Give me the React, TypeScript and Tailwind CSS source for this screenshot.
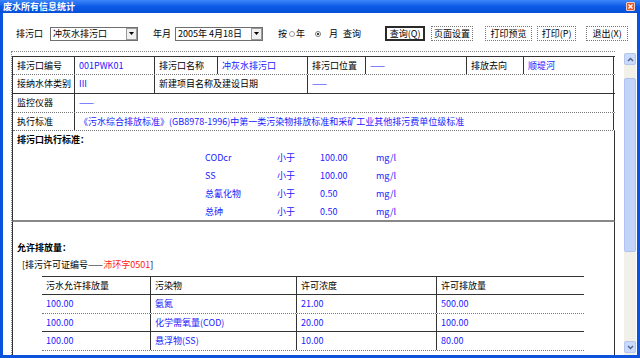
import React from "react";

const BL = "text-[#2020ff]";

function Tri() {
  return (
    <svg width="5" height="3" viewBox="0 0 5 3">
      <path d="M0 0h5L2.5 3z" fill="#000" />
    </svg>
  );
}

function Combo({ children, w }: { children: React.ReactNode; w: string }) {
  return (
    <div className={`h-[14px] ${w} border border-[#6f6f6f] bg-white flex items-center`}>
      <span className="flex-1 pl-[2px] whitespace-nowrap overflow-hidden leading-[12px]">{children}</span>
      <div className="w-[11px] h-[12px] border border-[#9a9a9a] bg-[#f0f0f0] flex items-center justify-center">
        <Tri />
      </div>
    </div>
  );
}

function Btn({ children, cls }: { children: React.ReactNode; cls: string }) {
  return (
    <div className={`h-[15px] bg-white flex items-center justify-center whitespace-nowrap leading-[12px] ${cls}`}>
      {children}
    </div>
  );
}

function Cell({ w, children, c = "" }: { w: string; children?: React.ReactNode; c?: string }) {
  return (
    <div className={`${w} h-full border-r border-[#333] flex items-center pl-[4px] whitespace-nowrap overflow-hidden ${c}`}>
      {children}
    </div>
  );
}

function Chev({ up }: { up?: boolean }) {
  return (
    <svg width="7" height="5" viewBox="0 0 7 5">
      <path d={up ? "M1 4L3.5 1.5L6 4" : "M1 1L3.5 3.5L6 1"} stroke="#4d6185" strokeWidth="1.4" fill="none" />
    </svg>
  );
}

export default function App() {
  const items = [
    ["CODcr", "小于", "100.00", "mg/l"],
    ["SS", "小于", "100.00", "mg/l"],
    ["总氰化物", "小于", "0.50", "mg/l"],
    ["总砷", "小于", "0.50", "mg/l"],
  ];
  return (
    <div className="w-[640px] h-[358px] bg-[#0b52dc] flex flex-col overflow-hidden font-['Noto_Sans_CJK_SC',sans-serif] text-[9px] leading-[12px] text-black">
      {/* title bar */}
      <div className="h-[13px] flex items-center pl-[3px] pr-[5px] bg-gradient-to-b from-[#3b86f8] via-[#0b5ae8] to-[#0650d6]">
        <span className="text-white font-bold text-[9px] leading-[13px] whitespace-nowrap">废水所有信息统计</span>
        <div className="ml-auto w-[9px] h-[9px] bg-[#e4582c] border border-[#f6c9b8] rounded-[1px] flex items-center justify-center">
          <svg width="5" height="5" viewBox="0 0 5 5">
            <path d="M0.5 0.5L4.5 4.5M4.5 0.5L0.5 4.5" stroke="#fff" strokeWidth="1.3" />
          </svg>
        </div>
      </div>

      {/* body */}
      <div className="flex-1 mx-[3px] mb-[3px] bg-white flex flex-col min-h-0">
        {/* toolbar */}
        <div className="h-[38px] shrink-0 flex items-center pt-[3px] whitespace-nowrap">
          <span className="ml-[13px]">排污口</span>
          <div className="ml-[7px]">
            <Combo w="w-[88px]">冲灰水排污口</Combo>
          </div>
          <span className="ml-[15px]">年月</span>
          <div className="ml-[4px]">
            <Combo w="w-[88px]">2005年 4月18日</Combo>
          </div>
          <span className="ml-[15px]">按</span>
          <div className="ml-[2px] w-[6px] h-[6px] rounded-full border border-[#9a9a9a] bg-white" />
          <span className="ml-[1px]">年</span>
          <div className="ml-[10px] w-[6px] h-[6px] rounded-full border border-[#7a7a7a] bg-white flex items-center justify-center">
            <div className="w-[2px] h-[2px] rounded-full bg-black" />
          </div>
          <span className="ml-[8px]">月</span>
          <span className="ml-[5px]">查询</span>

          <Btn cls="ml-[24px] w-[40px] border-2 border-[#2a2a2a]">查询(Q)</Btn>
          <Btn cls="ml-[6px] w-[42px] border border-dotted border-[#777]">页面设置</Btn>
          <Btn cls="ml-[12px] w-[47px] border border-dotted border-[#777]">打印预览</Btn>
          <Btn cls="ml-[5px] w-[39px] border border-dotted border-[#777]">打印(P)</Btn>
          <Btn cls="ml-[10px] w-[42px] border border-dotted border-[#777]">退出(X)</Btn>
        </div>

        {/* content */}
        <div className="flex-1 flex min-h-0">
          <div className="ml-[8px] w-[604px] border-t border-l border-dotted border-[#8a8a8a] pt-[4px] flex flex-col">
            {/* info table */}
            <div className="w-[603px] border-t border-l border-[#333]">
              <div className="flex h-[18px] border-b border-dotted border-[#777]">
                <Cell w="w-[62px]">排污口编号</Cell>
                <Cell w="w-[80px]" c={BL}>001PWK01</Cell>
                <Cell w="w-[63px]">排污口名称</Cell>
                <Cell w="w-[90px]" c={BL}>冲灰水排污口</Cell>
                <Cell w="w-[58px]">排污口位置</Cell>
                <Cell w="w-[101px]" c={BL}>——</Cell>
                <Cell w="w-[57px]">排放去向</Cell>
                <Cell w="w-[90px]" c={BL}>顺堤河</Cell>
              </div>
              <div className="flex h-[19px] border-b border-[#333]">
                <Cell w="w-[62px]">接纳水体类别</Cell>
                <Cell w="w-[80px]" c={BL}>III</Cell>
                <Cell w="w-[153px]">新建项目名称及建设日期</Cell>
                <Cell w="w-[306px]" c={BL}>——</Cell>
              </div>
              <div className="flex h-[19px] border-b border-dotted border-[#777]">
                <Cell w="w-[62px]">监控仪器</Cell>
                <Cell w="w-[539px]" c={BL}>——</Cell>
              </div>
              <div className="flex h-[18px] border-b border-dotted border-[#777]">
                <Cell w="w-[62px]">执行标准</Cell>
                <Cell w="w-[539px]" c={BL}>
                  《污水综合排放标准》(GB8978-1996)中第一类污染物排放标准和采矿工业其他排污费单位级标准
                </Cell>
              </div>
            </div>

            {/* section 1 */}
            <div className="w-[603px] h-[91px] border-l border-r border-b-2 border-b-[#888] border-b-dotted border-l-[#333] border-r-[#333] pl-[4px] pt-[3px]">
              <div className="font-bold">排污口执行标准：</div>
              <div className="mt-[3px] pl-[188px]">
                {items.map((r) => (
                  <div key={r[0]} className={`flex h-[18px] leading-[18px] ${BL}`}>
                    <span className="w-[72px]">{r[0]}</span>
                    <span className="w-[43px]">{r[1]}</span>
                    <span className="w-[56px]">{r[2]}</span>
                    <span>{r[3]}</span>
                  </div>
                ))}
              </div>
            </div>

            {/* section 2 */}
            <div className="w-[603px] flex-1 border-l border-r border-[#333] pl-[4px] pt-[20px]">
              <div className="font-bold">允许排放量：</div>
              <div className="mt-[5px] pl-[5px] whitespace-nowrap">
                [排污许可证编号——<span className="text-[#ff2020]">沛环字0501</span>]
              </div>
              <div className="mt-[5px] ml-[25px] w-[542px] border-t border-[#333]">
                <div className="flex h-[18px] border-b border-[#333]">
                  <Cell w="w-[109px]">污水允许排放量</Cell>
                  <Cell w="w-[146px]">污染物</Cell>
                  <Cell w="w-[140px]">许可浓度</Cell>
                  <Cell w="w-[147px]" c="border-r-0">许可排放量</Cell>
                </div>
                <div className={`flex h-[19px] border-b border-dotted border-[#777] ${BL}`}>
                  <Cell w="w-[109px]">100.00</Cell>
                  <Cell w="w-[146px]">氨氮</Cell>
                  <Cell w="w-[140px]">21.00</Cell>
                  <Cell w="w-[147px]" c="border-r-0">500.00</Cell>
                </div>
                <div className={`flex h-[18px] border-b border-[#333] ${BL}`}>
                  <Cell w="w-[109px]">100.00</Cell>
                  <Cell w="w-[146px]">化学需氧量(COD)</Cell>
                  <Cell w="w-[140px]">20.00</Cell>
                  <Cell w="w-[147px]" c="border-r-0">100.00</Cell>
                </div>
                <div className={`flex h-[19px] border-b border-dotted border-[#777] ${BL}`}>
                  <Cell w="w-[109px]">100.00</Cell>
                  <Cell w="w-[146px]">悬浮物(SS)</Cell>
                  <Cell w="w-[140px]">10.00</Cell>
                  <Cell w="w-[147px]" c="border-r-0">80.00</Cell>
                </div>
              </div>
            </div>
          </div>

          {/* scrollbar */}
          <div className="ml-[9px] mt-[2px] w-[12px] flex flex-col bg-[#f1f0e9]">
            <div className="h-[12px] shrink-0 rounded-[2px] bg-[#c9dafc] border border-[#b3c6f0] flex items-center justify-center">
              <Chev up />
            </div>
            <div className="h-[13px] shrink-0" />
            <div className="h-[174px] shrink-0 rounded-[2px] bg-[#c3d4fb] border border-[#aec3f1]" />
            <div className="flex-1" />
            <div className="h-[12px] shrink-0 mb-[2px] rounded-[2px] bg-[#c9dafc] border border-[#b3c6f0] flex items-center justify-center">
              <Chev />
            </div>
          </div>
        </div>
      </div>
    </div>
  );
}
